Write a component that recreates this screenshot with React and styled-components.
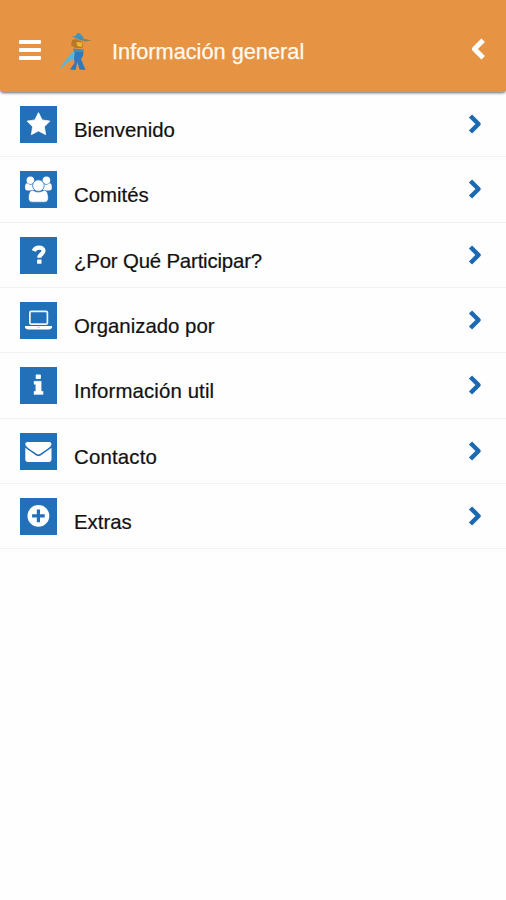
import styled, { createGlobalStyle } from "styled-components";

const GlobalStyle = createGlobalStyle`
body {
margin: 0;
background: #FEFEFE;
font-family: "Liberation Sans", Arial, sans-serif;
}
`

const Page = styled.div`
min-height: 900px;
overflow: hidden;
`

const Header = styled.header`
box-sizing: border-box;
display: flex;
align-items: center;

height: 92px;
padding: 12px 20px 0px 19px;

background: #E69443;
border-radius: 0px 0px 4px 4px;
box-shadow: 0px 1px 3px rgba(0, 0, 0, 0.6);
`

const MenuButton = styled.button`
display: flex;
flex-direction: column;
gap: 4px;
width: 22px;
margin-top: -4px;
padding: 0px;
border: none;
background: none;
cursor: pointer;
`

const MenuBar = styled.span`
width: 22px;
height: 4px;
border-radius: 1px;
background: #FFFFFF;
`

const Logo = styled.svg`
width: 34px;
height: 40px;
margin-left: 18px;
`

const Title = styled.h1`
flex: 1;
margin: 0px 0px 0px 19px;
font-weight: 400;
font-size: 21.75px;
line-height: 26px;
white-space: nowrap;
color: #FFFAF0;
-webkit-text-stroke: 0.25px #FFFAF0;
`

const Chevron = styled.svg`
flex: none;
width: 16px;
height: 24px;
fill: none;
stroke: ${props => props.$color};
stroke-width: ${props => props.$weight};
`

const BackButton = styled.button`
display: flex;
margin: -6px 0px 0px 0px;
padding: 0px;
border: none;
background: none;
cursor: pointer;
`

const List = styled.ul`
margin: 0px;
padding: 0px;
list-style: none;
`

const Row = styled.li`
box-sizing: border-box;
display: flex;
align-items: flex-start;

height: 65.3px;
padding: 14px 24px 0px 20px;

border-bottom: 1px solid #F1F1F1;

&:first-child {
height: 65.4px;
}
`

const Tile = styled.svg`
flex: none;
width: 37px;
height: 37px;
background: #2270B8;
fill: #FFFFFF;
`

const Label = styled.span`
flex: 1;
margin: 12px 0px 0px 17px;
font-size: 20.4px;
line-height: 24px;
letter-spacing: ${props => props.$spacing || 0}px;
color: #111111;
-webkit-text-stroke: 0.2px #111111;
`

const ChevronBox = styled.div`
display: flex;
margin-top: 6px;
`

const StarIcon = () => (
    <path d="M18.5 6.6 L22.2 13.9 L30 15.1 L24.4 20.8 L25.7 28.7 L18.5 25 L11.3 28.7 L12.6 20.8 L7 15.1 L14.8 13.9 Z" stroke="#FFFFFF" strokeWidth="0.7" strokeLinejoin="round" />
)

const UsersIcon = () => (
    <>
        <circle cx="10.4" cy="9.3" r="3.8" />
        <circle cx="26.4" cy="9.3" r="3.8" />
        <path d="M5.1 16.2 C5.1 13.4 5.8 12.2 7.3 12.3 Q10.4 14.8 14 12.6 L14 19.6 L7.6 19.6 Q5.1 19.6 5.1 17.2 Z" />
        <path d="M31.8 16.2 C31.8 13.4 31.1 12.2 29.6 12.3 Q26.4 14.8 23 12.6 L23 19.6 L29.3 19.6 Q31.8 19.6 31.8 17.2 Z" />
        <path d="M12.8 19.3 Q18.4 22.8 24 19.3 C26.8 19.1 28.3 22.6 28.3 27 Q28.3 31.2 24.5 31.2 L12.3 31.2 Q8.5 31.2 8.5 27 C8.5 22.6 10 19.1 12.8 19.3 Z" stroke="#2270B8" strokeWidth="0.6" />
        <circle cx="18.4" cy="14.6" r="5.8" stroke="#2270B8" strokeWidth="0.8" />
    </>
)

const QuestionIcon = () => (
    <>
        <path d="M13.8 14 C15.4 9.5 23.5 9.5 23.5 13.8 C23.5 17.2 19.3 16.9 19.3 20.8" fill="none" stroke="#FFFFFF" strokeWidth="4.2" />
        <rect x="17.1" y="22.4" width="4.4" height="4.4" rx="0.5" />
    </>
)

const LaptopIcon = () => (
    <>
        <rect x="9.9" y="9.4" width="17.5" height="12.8" rx="1.3" fill="none" stroke="#EFF8FF" strokeWidth="1.7" />
        <path d="M5 24.1 H32 V25.6 Q31.5 27.5 28.7 27.5 H8.3 Q5.5 27.5 5 25.6 Z" />
        <path d="M17 25.3 H20" stroke="#A9C4DA" strokeWidth="0.7" />
    </>
)

const InfoIcon = () => (
    <>
        <rect x="15.7" y="7.6" width="5.2" height="4.4" rx="0.8" />
        <path d="M14 14.2 H21.2 V24.3 H23.1 V27.4 H14 V24.3 H15.8 V17.3 H14 Z" stroke="#FFFFFF" strokeWidth="0.4" strokeLinejoin="round" />
    </>
)

const EnvelopeIcon = () => (
    <>
        <path d="M7.5 9 H29.2 Q31.5 9 31.5 11 C31.5 13.2 28.5 15.2 22.1 19.5 Q19.6 21.5 18.4 21.5 Q17.2 21.5 14.7 19.5 C8.3 15.2 5.3 13.2 5.3 11 Q5.3 9 7.5 9 Z" />
        <path d="M5.3 14.7 C8 17 10.7 18.5 14 21 Q17 23.2 18.4 23.2 Q19.8 23.2 22.8 21 C26.1 18.5 28.8 17 31.5 14.7 V26.6 Q31.5 29 29.2 29 H7.5 Q5.3 29 5.3 26.6 Z" />
    </>
)

const PlusIcon = () => (
    <>
        <circle cx="18.4" cy="17.9" r="10.9" />
        <path d="M18.4 11.6 V24.2 M12.1 17.9 H24.7" stroke="#2270B8" strokeWidth="3.2" />
    </>
)

const items = [
    { text: "Bienvenido", Icon: StarIcon },
    { text: "Comités", Icon: UsersIcon },
    { text: "¿Por Qué Participar?", Icon: QuestionIcon, spacing: -0.18 },
    { text: "Organizado por", Icon: LaptopIcon },
    { text: "Información util", Icon: InfoIcon, spacing: 0.12 },
    { text: "Contacto", Icon: EnvelopeIcon, spacing: 0.18 },
    { text: "Extras", Icon: PlusIcon },
]

function DancersLogo(){
    return(
        <Logo viewBox="0 0 34 40">
            <path d="M13.5 20 L21 21 L17 26 L9 30 L1 37.5 C3 32 8 26 13.5 20 Z" fill="#62B5D2" />
            <path d="M16 18 L24.5 19 L24 24 L22 27 L25.5 35.5 L26.5 38 L20.5 37.5 L18.5 30 L16.5 38 L11 37.5 L15.5 31 L15 26 Z" fill="#3279B5" />
            <path d="M13 8 L17 7 L24 10 L23.5 16 L16 16 L12 13 Z" fill="#B97827" />
            <path d="M17.5 10 L23.5 10.5 L22.5 15 L18 14 Z" fill="#EBB52F" />
            <path d="M14 16.5 L25 17.5 L23.5 20 L15 20 Z" fill="#4B8CAE" />
            <path d="M12.5 4.5 L16.5 4 Q18 -0.5 21 1.5 L25 6 L22 8.5 L17.5 6.5 Z" fill="#3F94BD" />
            <path d="M20 7 L27 7.3 L32.5 8.4 L26 9.6 Z" fill="#817F68" />
        </Logo>
    );
}

function App(){
    return(
        <Page>
            <GlobalStyle/>
            <Header>
                <MenuButton aria-label="Menú">
                    <MenuBar/>
                    <MenuBar/>
                    <MenuBar/>
                </MenuButton>
                <DancersLogo/>
                <Title>Información general</Title>
                <BackButton aria-label="Volver">
                    <Chevron viewBox="0 0 16 24" $color="#FFFFFF" $weight={5}>
                        <path d="M13.2 3.2 L4.4 12 L13.2 20.8" strokeLinejoin="round" />
                    </Chevron>
                </BackButton>
            </Header>
            <List>
                {items.map(({ text, Icon, spacing }) => (
                    <Row key={text}>
                        <Tile viewBox="0 0 37 37">
                            <Icon/>
                        </Tile>
                        <Label $spacing={spacing}>{text}</Label>
                        <ChevronBox>
                            <Chevron viewBox="0 0 16 24" $color="#1B69B0" $weight={4.5}>
                                <path d="M4.5 4 L12.5 12 L4.5 20" strokeLinejoin="round" />
                            </Chevron>
                        </ChevronBox>
                    </Row>
                ))}
            </List>
        </Page>
    );
}
export default App;
